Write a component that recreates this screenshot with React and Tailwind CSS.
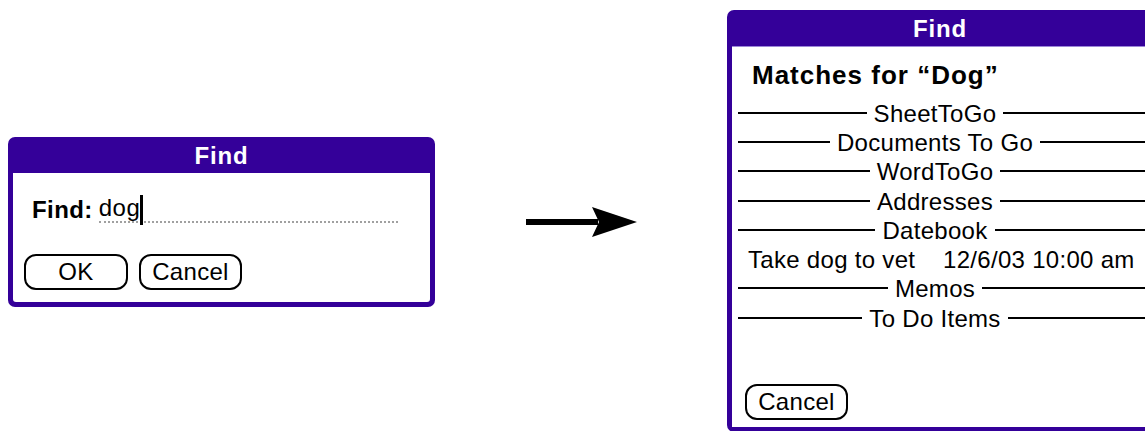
import React from "react";

const font = { fontFamily: '"Liberation Sans", Arial, sans-serif' };

const sections = [
    "SheetToGo",
    "Documents To Go",
    "WordToGo",
    "Addresses",
    "Datebook",
];

const PalmButton = ({ children, className = "" }) => (
    <div
        className={`flex items-center justify-center h-[36px] border-2 border-black rounded-[12px] text-[24px] tracking-[0.3px] text-black leading-none ${className}`}
    >
        {children}
    </div>
);

const SectionRow = ({ label }) => (
    <div className="grid grid-cols-[1fr_auto_1fr] items-center h-[29.3px]">
        <div className="h-[2px] bg-black -mt-[2px]" />
        <span className="px-[7px] text-[24px] tracking-[0.3px] leading-none text-black">{label}</span>
        <div className="h-[2px] bg-black -mt-[2px] -mr-[16px]" />
    </div>
);

const Arrow = () => (
    <svg width="111" height="30" viewBox="0 0 111 30" className="shrink-0">
        <rect x="0" y="12" width="72" height="6" fill="#000" />
        <polygon points="66,0 111,15 66,30 73,15" fill="#000" />
    </svg>
);

export default function App() {
    return (
        <div
            className="w-[1145px] h-[431px] overflow-hidden bg-white flex items-start pl-[8px]"
            style={font}
        >
            {/* Find dialog */}
            <div className="mt-[137px] w-[427px] h-[170px] shrink-0 flex flex-col bg-[#340099] rounded-[7px] px-[5px] pb-[5px]">
                <div className="h-[36px] flex items-center justify-center pt-[2px] text-white font-bold text-[24px] tracking-[0.8px] leading-none">
                    Find
                </div>
                <div className="flex-1 bg-white rounded-b-[3px] flex flex-col">
                    <div className="mt-[22px] h-[30px] flex items-center pl-[19px]">
                        <span className="font-bold text-[24px] tracking-[0.4px] leading-none text-black">Find:</span>
                        <div className="ml-[6px] w-[299px] h-[28px] flex items-center border-b-2 border-dotted border-[#a0a0a0] self-start">
                            <span className="text-[24px] tracking-[0.6px] leading-none text-black">dog</span>
                            <span className="inline-block w-[3px] h-[30px] bg-black -mb-[2px] self-end translate-y-[2px]" />
                        </div>
                    </div>
                    <div className="mt-[29px] flex gap-[11px] pl-[11px]">
                        <PalmButton className="w-[104px]">OK</PalmButton>
                        <PalmButton className="w-[103px]">Cancel</PalmButton>
                    </div>
                </div>
            </div>

            {/* Arrow */}
            <div className="ml-[91px] mt-[207px] shrink-0">
                <Arrow />
            </div>

            {/* Results dialog */}
            <div className="ml-[90px] mt-[10px] w-[426px] h-[422px] shrink-0 flex flex-col bg-[#340099] rounded-[7px] px-[5px] pb-[5px]">
                <div className="h-[37px] flex items-center justify-center pt-[2px] text-white font-bold text-[24px] tracking-[0.8px] leading-none border-b border-[#9c86d8]">
                    Find
                </div>
                <div className="flex-1 bg-white flex flex-col">
                    <div className="mt-[13px] h-[30px] flex items-center pl-[20px] font-bold text-[26px] tracking-[1px] leading-none text-black">
                        Matches for “Dog”
                    </div>
                    <div className="mt-[9px] flex flex-col pl-[6px] pr-[16px]">
                        {sections.map((s) => (
                            <SectionRow key={s} label={s} />
                        ))}
                        <div className="h-[29.3px] flex items-center pl-[10px] text-[24px] tracking-[0.3px] leading-none text-black whitespace-nowrap">
                            <span className="w-[195px] shrink-0">Take dog to vet</span>
                            <span>12/6/03 10:00 am</span>
                        </div>
                        <SectionRow label="Memos" />
                        <SectionRow label="To Do Items" />
                    </div>
                    <div className="mt-[51px] pl-[13px]">
                        <PalmButton className="w-[103px] h-[35px]">Cancel</PalmButton>
                    </div>
                </div>
            </div>
        </div>
    );
}
